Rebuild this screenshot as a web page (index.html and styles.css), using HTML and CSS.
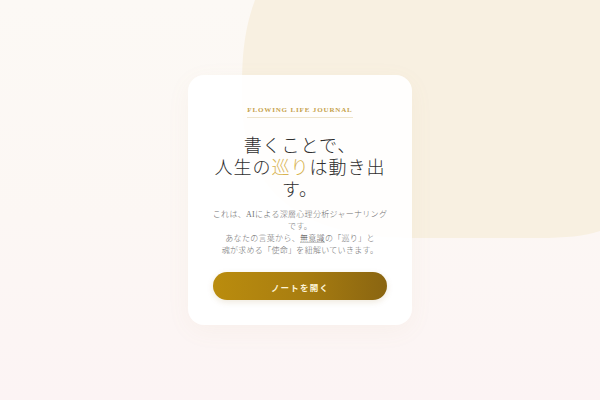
FILE: index.html
```html
<!DOCTYPE html>
<html lang="ja">
<head>
<meta charset="utf-8">
<title>Flowing Life Journal</title>
<link rel="stylesheet" href="styles.css">
</head>
<body>
<main class="card">
  <p class="brand">FLOWING LIFE JOURNAL</p>
  <h1 class="title">書くことで、<br>人生の<span class="accent">巡り</span>は動き出<br>す。</h1>
  <p class="lead">これは、AIによる深層心理分析ジャーナリングです。<br>あなたの言葉から、<span class="em">無意識</span>の「巡り」と<br>魂が求める「使命」を紐解いていきます。</p>
  <button class="cta" type="button">ノートを開く</button>
</main>
</body>
</html>
```

FILE: styles.css
```css
html, body {
  margin: 0;
  padding: 0;
  height: 100%;
}

body {
  overflow: hidden;
  display: flex;
  align-items: center;
  justify-content: center;
  background-color: #fcf7f4;
  background-image:
    url("data:image/svg+xml,%3Csvg xmlns='http://www.w3.org/2000/svg' width='600' height='400' viewBox='0 0 600 400'%3E%3Cpath d='M255 0 C247 22 242 45 242 85 L242 100 C242 190 300 238 410 238 L540 238 C565 238 585 236 600 231 L600 0 Z' fill='%23f8f0e1'/%3E%3C/svg%3E"),
    linear-gradient(180deg, #fcf9f5 0%, #fcf7f4 55%, #fcf4f4 100%);
  background-repeat: no-repeat;
  background-size: 600px 400px, 100% 100%;
  background-position: 0 0, 0 0;
  font-family: "Liberation Serif", "Noto Sans CJK JP", serif;
  color: #333;
}

.card {
  box-sizing: border-box;
  width: 224px;
  height: 250px;
  padding: 31px 24px 0;
  background: rgba(255, 255, 255, 0.93);
  border-radius: 16px;
  box-shadow: 0 6px 24px rgba(180, 150, 110, 0.06);
  display: flex;
  flex-direction: column;
  align-items: center;
  text-align: center;
}

.brand {
  margin: 0;
  font-size: 7px;
  font-weight: 700;
  letter-spacing: 0.85px;
  line-height: 9px;
  color: #c6a24c;
  padding-bottom: 2px;
  border-bottom: 1px solid #efe5cc;
}

.title {
  margin: 17px 0 0;
  font-size: 18px;
  font-weight: 300;
  line-height: 22px;
  letter-spacing: 1px;
  color: #2f2f2f;
}

.accent {
  display: inline-block;
  line-height: 22px;
  color: #d8b452;
}

.lead {
  margin: 8px 0 0;
  font-size: 8px;
  font-weight: 300;
  line-height: 12px;
  letter-spacing: 0.3px;
  color: #707070;
}

.em {
  color: #4a4a4a;
  text-decoration: underline;
  text-decoration-color: #c8c8c8;
  text-underline-offset: 1px;
}

.cta {
  margin-top: 15px;
  width: 174px;
  height: 28px;
  border: 0;
  border-radius: 14px;
  background: linear-gradient(90deg, #ba8c0e 0%, #a97e10 50%, #8a6511 100%);
  box-shadow: 0 2px 6px rgba(140, 100, 20, 0.15);
  color: #fdf4d8;
  font-family: "Liberation Serif", "Noto Sans CJK JP", serif;
  font-size: 8.5px;
  font-weight: 700;
  letter-spacing: 1.2px;
  padding: 2px 0 0;
  cursor: pointer;
}
```
